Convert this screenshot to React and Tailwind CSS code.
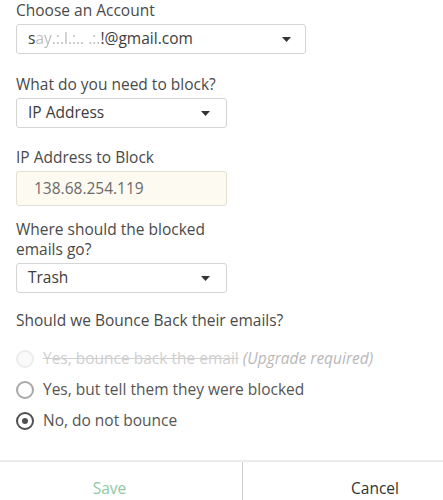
import React from "react";

function Caret() {
  return (
    <svg width="9" height="5" viewBox="0 0 9 5" className="shrink-0">
      <path d="M0 0 H9 L4.5 5 Z" fill="#333" />
    </svg>
  );
}

function Select({ children, width, caretRight = "pr-[16px]" }) {
  return (
    <div
      className={`${width} h-[30px] flex items-center justify-between pl-[11px] ${caretRight} border border-[#d4d4d4] rounded-[3px] bg-white text-[15.5px] text-[#3d3d3d]`}
    >
      <span>{children}</span>
      <Caret />
    </div>
  );
}

function Label({ children, className = "" }) {
  return (
    <div className={`text-[15.5px] leading-[20px] text-[#4a4a4a] ${className}`}>
      {children}
    </div>
  );
}

function Radio({ state }) {
  if (state === "disabled") {
    return (
      <span className="w-[18px] h-[18px] rounded-full border-2 border-[#ececec] bg-[#fafafa] shrink-0" />
    );
  }
  if (state === "checked") {
    return (
      <span className="w-[18px] h-[18px] rounded-full border-2 border-[#4f4f4f] flex items-center justify-center shrink-0">
        <span className="w-[6px] h-[6px] rounded-full bg-[#4f4f4f]" />
      </span>
    );
  }
  return (
    <span className="w-[18px] h-[18px] rounded-full border-2 border-[#a8a8a8] bg-white shrink-0" />
  );
}

export default function App() {
  return (
    <div
      className="w-[443px] h-[500px] overflow-hidden bg-white"
      style={{ fontFamily: '"Open Sans", sans-serif' }}
    >
      <div className="px-4">
        <Label>Choose an Account</Label>
        <div className="mt-[4px]">
          <Select width="w-[290px]" caretRight="pr-[14px]">
            <span>s</span>
            <span className="text-[#bdbdbd] blur-[0.6px]">ay.:.l.:.. .:.</span>
            <span>!@gmail.com</span>
          </Select>
        </div>

        <Label className="mt-[20px]">What do you need to block?</Label>
        <div className="mt-[4px]">
          <Select width="w-[211px]">IP Address</Select>
        </div>

        <Label className="mt-[19px]">IP Address to Block</Label>
        <div className="mt-[4px] w-[211px] h-[35px] flex items-center pl-[17px] border border-[#e4e0d6] rounded-[3px] bg-[#fdfaf2] text-[15.5px] text-[#6a6a6a]">
          138.68.254.119
        </div>

        <Label className="mt-[13px] w-[211px]">
          Where should the blocked emails go?
        </Label>
        <div className="mt-[4px]">
          <Select width="w-[211px]">Trash</Select>
        </div>

        <Label className="mt-[17px]">Should we Bounce Back their emails?</Label>

        <div className="mt-[13px] flex flex-col">
          <div className="h-[31px] flex items-center gap-[9px]">
            <Radio state="disabled" />
            <span className="text-[15.5px] text-[#cfcfcf]">
              <span className="line-through">Yes, bounce back the email</span>{" "}
              <span className="italic text-[#b8b8b8]">(Upgrade required)</span>
            </span>
          </div>
          <div className="h-[31px] flex items-center gap-[9px]">
            <Radio state="empty" />
            <span className="text-[15.5px] text-[#555]">
              Yes, but tell them they were blocked
            </span>
          </div>
          <div className="h-[31px] flex items-center gap-[9px]">
            <Radio state="checked" />
            <span className="text-[15.5px] text-[#555]">No, do not bounce</span>
          </div>
        </div>
      </div>

      <div className="mt-[24px] h-[56px] border-t-2 border-[#ececec] flex">
        <button className="w-[243px] shrink-0 pr-[23px] text-[15.5px] text-[#8fc8a2] border-r border-[#cfcfcf]">
          Save
        </button>
        <button className="w-[264px] shrink-0 text-[15.5px] text-[#333]">
          Cancel
        </button>
      </div>
    </div>
  );
}
